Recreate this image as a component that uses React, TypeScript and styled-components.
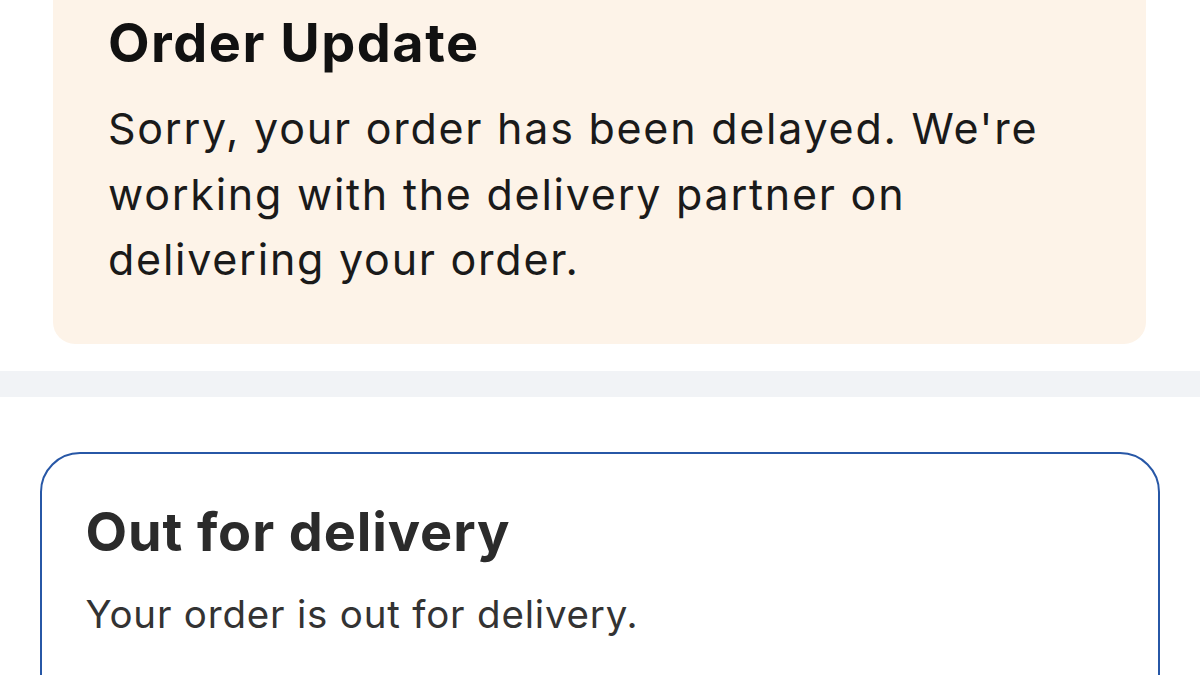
import * as React from 'react';
import styled, { createGlobalStyle } from 'styled-components'

const GlobalStyle = createGlobalStyle`
  html, body {
    margin: 0;
    padding: 0;
    background: #ffffff;
    overflow: hidden;
  }
  body {
    font-family: Inter, "Noto Sans", "Liberation Sans", sans-serif;
    -webkit-font-smoothing: antialiased;
  }
`

const Screen = styled.div`
  width: 1200px;
  height: 675px;
  overflow: hidden;
`

// the list is scrolled a little, so the top of the notice card is hidden
const Scroller = styled.div`
  margin-top: -40px;
  display: flex;
  flex-direction: column;
`

const NoticeSection = styled.section`
  padding: 0 54px 27px 53px;
`

const NoticeCard = styled.div`
  background: #fdf3e8;
  border-radius: 22px;
  padding: 51px 30px 51px 55px;
`

const NoticeTitle = styled.h2`
  margin: 0 0 21px;
  font-size: 54px;
  line-height: 64px;
  font-weight: 700;
  color: #111111;
  letter-spacing: 1.5px;
`

const NoticeText = styled.p`
  margin: 0;
  font-size: 43px;
  line-height: 65.5px;
  font-weight: 400;
  color: #1a1a1a;
  letter-spacing: 1.75px;
  max-width: 980px;
`

const Divider = styled.div`
  height: 26px;
  background: #f1f3f6;
`

const StatusSection = styled.section`
  padding: 55px 40px 0 40px;
`

const StatusCard = styled.div`
  border: 2.5px solid #2757a6;
  border-radius: 40px;
  padding: 44.5px 44px 60px 43.5px;
  min-height: 300px;
`

const StatusTitle = styled.h3`
  margin: 0 0 23px;
  font-size: 54px;
  line-height: 68px;
  font-weight: 700;
  color: #2b2b2b;
  letter-spacing: 0.9px;
`

const StatusText = styled.p`
  margin: 0;
  font-size: 38.5px;
  line-height: 50px;
  color: #333333;
  letter-spacing: 0.8px;
`

export default function App() {
  return (
    <Screen>
      <GlobalStyle />
      <Scroller>
        <NoticeSection>
          <NoticeCard>
            <NoticeTitle>Order Update</NoticeTitle>
            <NoticeText>
              Sorry, your order has been delayed. We're working with the delivery partner on delivering your order.
            </NoticeText>
          </NoticeCard>
        </NoticeSection>
        <Divider />
        <StatusSection>
          <StatusCard>
            <StatusTitle>Out for delivery</StatusTitle>
            <StatusText>Your order is out for delivery.</StatusText>
          </StatusCard>
        </StatusSection>
      </Scroller>
    </Screen>
  )
}
